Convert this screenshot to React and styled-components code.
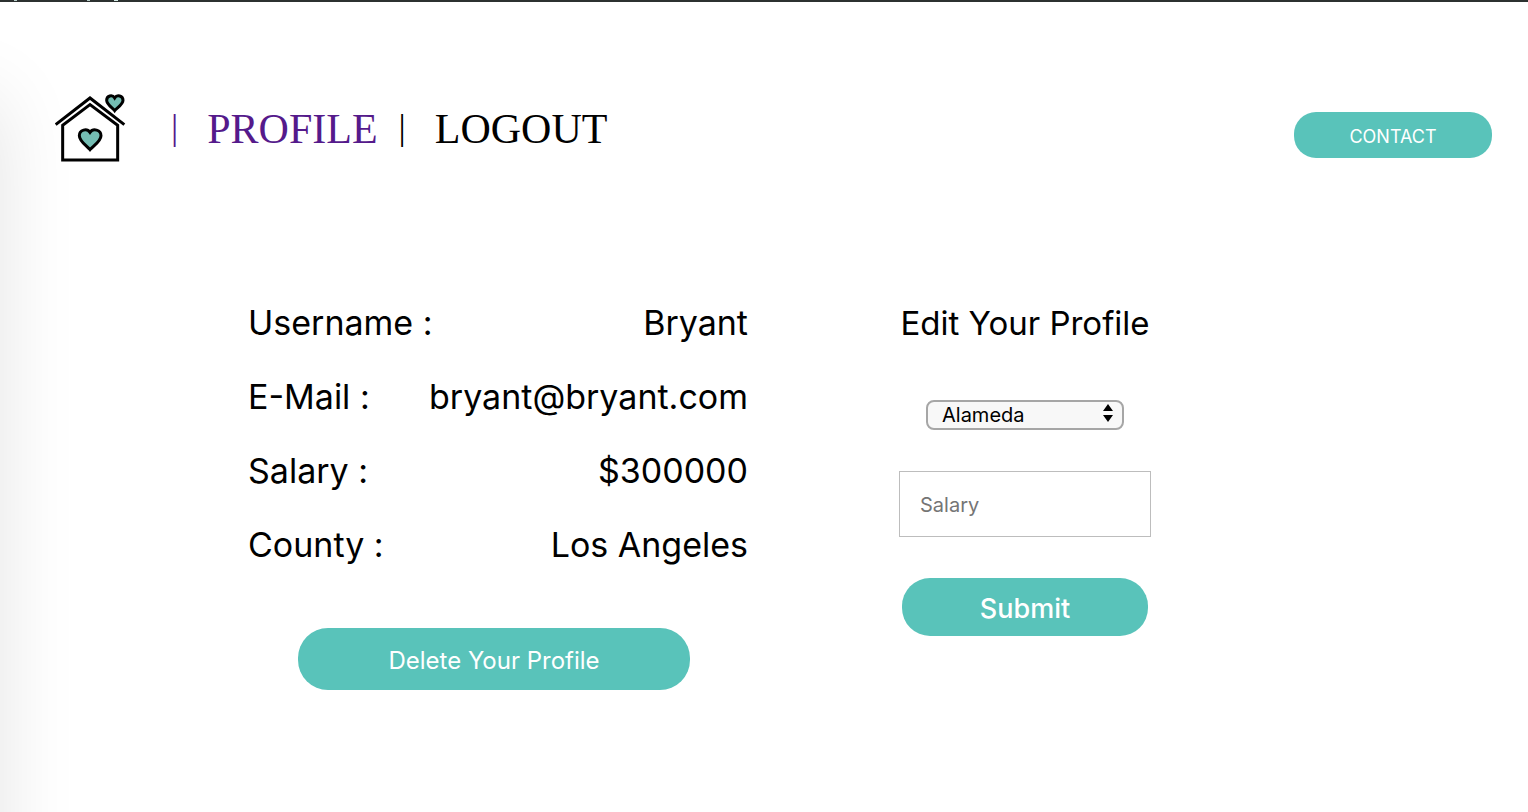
import React, { useState } from "react";
import styled, { createGlobalStyle } from "styled-components";

const teal = "#59c3ba";

const GlobalStyle = createGlobalStyle`
  * { box-sizing: border-box; }
  body { margin: 0; background: #fff; color: #000; font-family: Inter, "Liberation Sans", sans-serif; }
`;

const Page = styled.div`
  position: relative;
  min-height: 100vh;
  overflow: hidden;
`;

const TopStrip = styled.div`
  height: 2px;
  background:
    linear-gradient(#b9cfca, #b9cfca) 14px 0 / 3px 1px no-repeat,
    linear-gradient(#b9cfca, #b9cfca) 87px 0 / 3px 1px no-repeat,
    linear-gradient(#d5ebe6, #d5ebe6) 114px 0 / 4px 1px no-repeat,
    #2c3130;
`;

const SideShadow = styled.div`
  position: absolute;
  top: 98px;
  bottom: -100px;
  left: -100px;
  width: 100px;
  box-shadow: 0 0 80px rgba(0, 0, 0, 0.11);
  pointer-events: none;
`;

const Header = styled.header`
  display: flex;
  align-items: flex-end;
  justify-content: space-between;
  padding: 92px 36px 0 55px;
`;

const Nav = styled.nav`
  display: flex;
  align-items: center;
`;

const HomeLink = styled.a`
  display: block;
  height: 68px;
  margin-right: 45px;
`;

const NavLink = styled.a`
  display: flex;
  align-items: center;
  gap: 29px;
  margin: 2px 21px 0 0;
  color: ${(p) => (p.$visited ? "#551a8b" : "#000")};
  font: 42px/48px "Liberation Serif", serif;
  text-decoration: none;
`;

const Divider = styled.span`
  font-size: 36px;
  line-height: 44px;
  padding-bottom: 4px;
`;

const PillButton = styled.button`
  display: block;
  width: ${(p) => p.$width}px;
  height: ${(p) => p.$height}px;
  padding: 2px 0 0;
  border: 0;
  border-radius: ${(p) => p.$radius}px;
  background: ${teal};
  color: #fff;
  font: ${(p) => p.$weight || 400} ${(p) => p.$size}px Inter, sans-serif;
  cursor: pointer;
`;

const HeaderAction = styled.div`
  padding-bottom: 4px;
`;

const Main = styled.main`
  display: flex;
  align-items: flex-start;
  gap: 151px;
  padding: 124px 36px 60px 248px;
`;

const Profile = styled.section`
  width: 500px;
`;

const Details = styled.dl`
  width: 100%;
  margin: 0;
`;

const DetailRow = styled.div`
  display: flex;
  justify-content: space-between;
  font-size: 34px;
  line-height: 74px;
`;

const Value = styled.dd`
  margin: 0;
`;

const ProfileActions = styled.div`
  padding: 46px 0 0 50px;
`;

const EditForm = styled.form`
  width: 252px;
  display: flex;
  flex-direction: column;
  align-items: center;
`;

const Title = styled.h2`
  margin: 0;
  font-size: 33px;
  line-height: 74px;
  font-weight: 400;
  white-space: nowrap;
`;

const SelectBox = styled.div`
  position: relative;
  width: 198px;
  margin: 40px 0 41px;
`;

const CountySelect = styled.select`
  display: block;
  appearance: none;
  width: 100%;
  height: 30px;
  padding: 0 30px 0 14px;
  border: 2px solid #a6a6a6;
  border-radius: 8px;
  background: #f8f8f8;
  color: #000;
  font: 20px Inter, sans-serif;
`;

const Arrows = styled.svg`
  position: absolute;
  top: 4px;
  right: 11px;
  pointer-events: none;
`;

const SalaryInput = styled.input`
  width: 100%;
  height: 66px;
  margin-bottom: 41px;
  padding: 2px 20px 0;
  border: 1px solid #bdbdbd;
  background: #fff;
  font: 20px Inter, sans-serif;
  &::placeholder { color: #757575; opacity: 1; }
`;

function HouseLogo() {
  return (
    <svg width="71" height="68" viewBox="45 42 213 204" fill="none" stroke="#000" strokeWidth="9" aria-hidden="true">
      <path d="M47 134 150 54 253 134" />
      <path d="M68 136V240H233V136L150 74Z" />
      <path d="M150 209C142 199 118 184 118 167C118 149 141 144 150 157C159 144 183 149 183 167C183 184 158 199 150 209Z" fill="#74bdb3" />
      <path d="M224 92C218 84 200 74 200 61C200 47 217 43 224 54C231 43 249 47 249 61C249 74 230 84 224 92Z" fill="#74bdb3" />
    </svg>
  );
}

const details = [
  ["Username :", "Bryant"],
  ["E-Mail :", "bryant@bryant.com"],
  ["Salary :", "$300000"],
  ["County :", "Los Angeles"],
];

export default function App() {
  const [county, setCounty] = useState("Alameda");
  return (
    <Page>
      <GlobalStyle />
      <TopStrip />
      <SideShadow />
      <Header>
        <Nav>
          <HomeLink href="#home" aria-label="Home"><HouseLogo /></HomeLink>
          <NavLink href="#profile" $visited><Divider>|</Divider><span>PROFILE</span></NavLink>
          <NavLink href="#logout"><Divider>|</Divider><span>LOGOUT</span></NavLink>
        </Nav>
        <HeaderAction>
          <PillButton type="button" $width={198} $height={46} $radius={22} $size={18}>CONTACT</PillButton>
        </HeaderAction>
      </Header>
      <Main>
        <Profile>
          <Details>
            {details.map(([label, value]) => (
              <DetailRow key={label}>
                <dt>{label}</dt>
                <Value>{value}</Value>
              </DetailRow>
            ))}
          </Details>
          <ProfileActions>
            <PillButton type="button" $width={392} $height={62} $radius={30} $size={24}>Delete Your Profile</PillButton>
          </ProfileActions>
        </Profile>
        <EditForm onSubmit={(e) => e.preventDefault()}>
          <Title>Edit Your Profile</Title>
          <SelectBox>
            <CountySelect aria-label="County" value={county} onChange={(e) => setCounty(e.target.value)}>
              <option>Alameda</option>
              <option>Los Angeles</option>
            </CountySelect>
            <Arrows width="10" height="19" viewBox="0 0 10 19" aria-hidden="true">
              <path d="M5 0 10 7H0ZM5 18 0 11H10Z" />
            </Arrows>
          </SelectBox>
          <SalaryInput aria-label="Salary" placeholder="Salary" />
          <PillButton type="submit" $width={246} $height={58} $radius={28} $size={27} $weight={500}>Submit</PillButton>
        </EditForm>
      </Main>
    </Page>
  );
}
